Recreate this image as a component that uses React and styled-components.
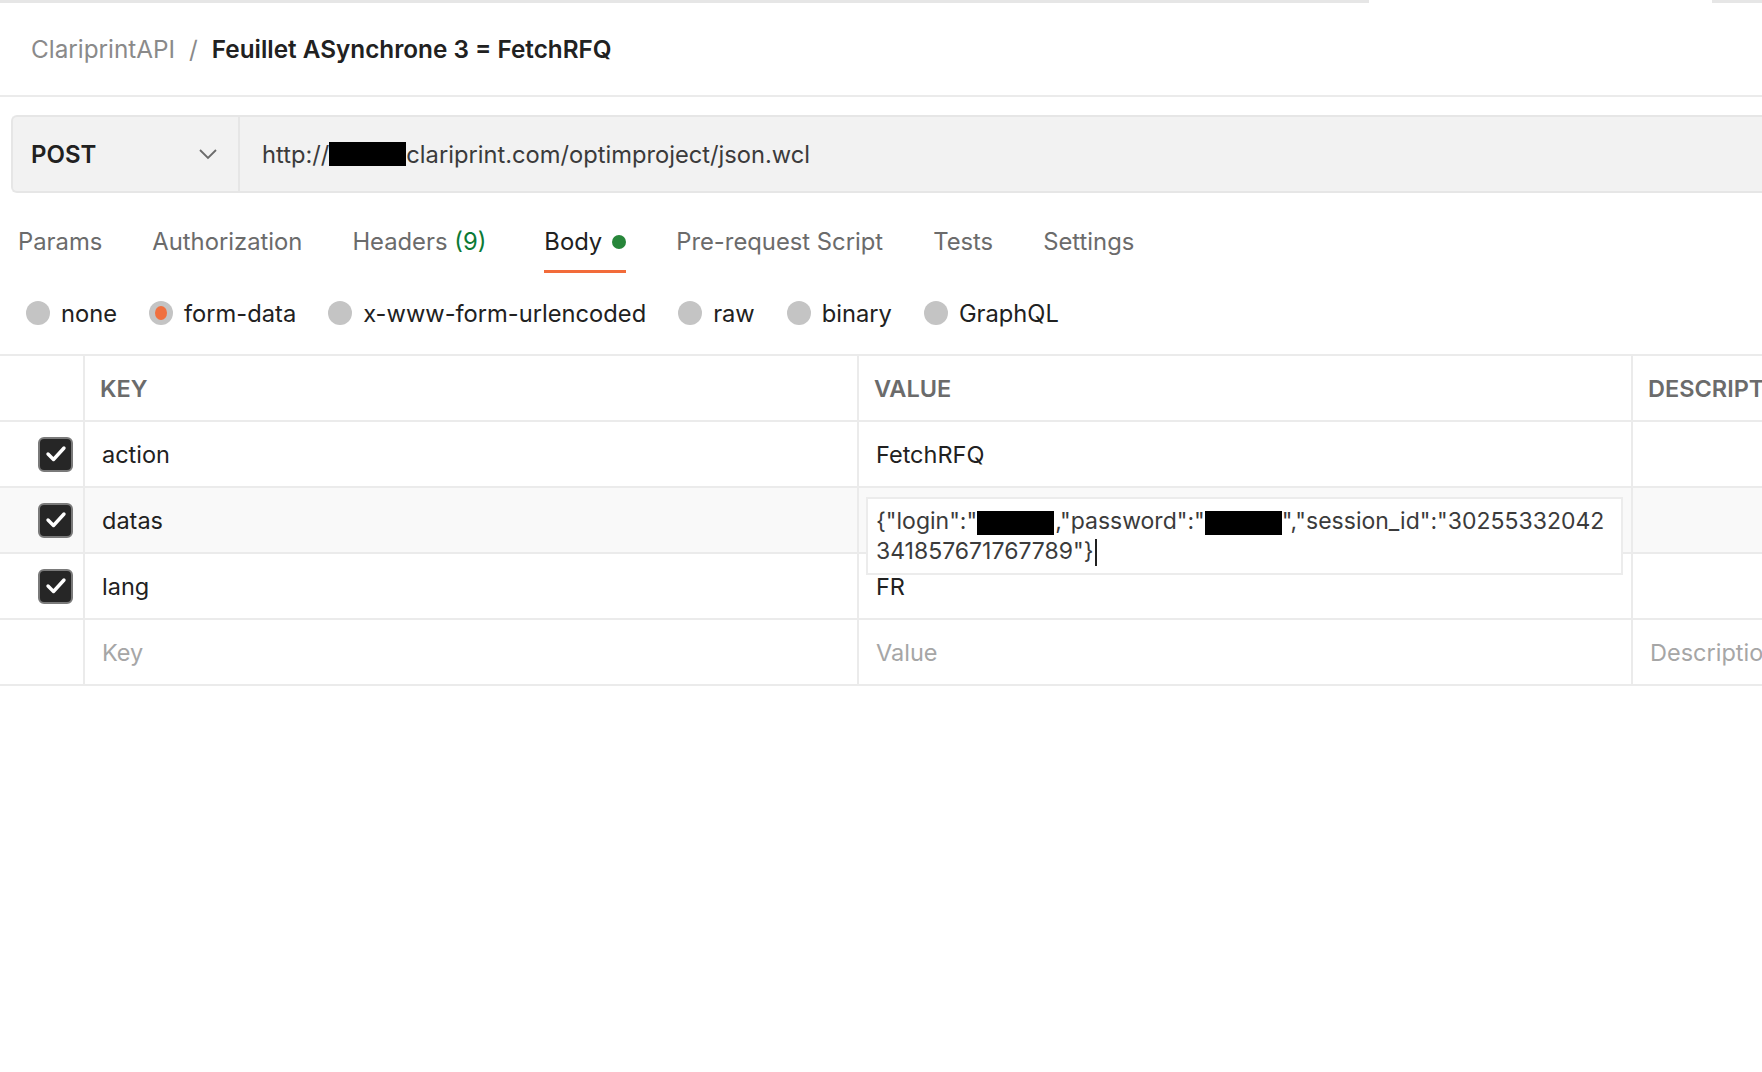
import React from "react";
import styled, { createGlobalStyle } from "styled-components";

const Global = createGlobalStyle`
  html, body {
    margin: 0;
    padding: 0;
    background: #ffffff;
    overflow: hidden;
  }
  body {
    font-family: Inter, "Noto Sans", "Liberation Sans", sans-serif;
    color: #212121;
  }
`;

const Page = styled.div`
  width: 1762px;
  height: 1072px;
  background: #fff;
  overflow: hidden;
`;

const TopStrip = styled.div`
  display: flex;
  height: 3px;
`;

const StripPart = styled.div`
  width: ${(p) => (p.$w ? p.$w + "px" : "auto")};
  flex: ${(p) => (p.$w ? "none" : "1")};
  background: ${(p) => (p.$active ? "#ffffff" : "#e6e6e6")};
`;

const Header = styled.div`
  height: 92px;
  display: flex;
  align-items: center;
  padding-left: 31px;
  border-bottom: 2px solid #ebebeb;
  font-size: 24.3px;
  gap: 14px;
`;

const Crumb = styled.span`
  color: #8a8a8a;
`;

const Title = styled.span`
  color: #212121;
  font-weight: 600;
`;

const UrlRow = styled.div`
  padding: 18px 0 0 11px;
`;

const UrlBar = styled.div`
  height: 74px;
  display: flex;
  background: #f2f2f2;
  border: 2px solid #e6e6e6;
  border-right: none;
  border-radius: 6px 0 0 6px;
`;

const Method = styled.div`
  width: 227px;
  box-sizing: border-box;
  padding: 0 20px 0 18px;
  display: flex;
  align-items: center;
  justify-content: space-between;
  border-right: 2px solid #e6e6e6;
  font-size: 24px;
  font-weight: 600;
  color: #212121;
`;

const UrlText = styled.div`
  display: flex;
  align-items: center;
  padding-left: 22px;
  font-size: 23.7px;
  color: #3b3b3b;
`;

const Redact = styled.span`
  display: inline-block;
  width: ${(p) => p.$w}px;
  height: ${(p) => p.$h || 22}px;
  background: #000;
  vertical-align: middle;
  margin: ${(p) => p.$m || "0"};
`;

const Tabs = styled.div`
  display: flex;
  gap: 50px;
  padding-left: 18px;
`;

const Tab = styled.div`
  display: flex;
  align-items: center;
  gap: 10px;
  padding-top: 34px;
  height: 30px;
  padding-bottom: 13px;
  margin-right: ${(p) => p.$extra || 0}px;
  border-bottom: 3px solid ${(p) => (p.$active ? "#f26b3a" : "transparent")};
  font-size: 23.8px;
  line-height: 30px;
  color: ${(p) => (p.$active ? "#212121" : "#6b6b6b")};
`;

const Count = styled.span`
  color: #0b7a35;
`;

const Dot = styled.span`
  width: 14px;
  height: 14px;
  border-radius: 50%;
  background: #27863a;
`;

const Radios = styled.div`
  display: flex;
  align-items: center;
  gap: 32px;
  height: 50px;
  margin: 15px 0 16px;
  padding-left: 26px;
`;

const RadioItem = styled.label`
  display: flex;
  align-items: center;
  gap: 11px;
  font-size: 23.7px;
  color: #212121;
`;

const RadioCircle = styled.span`
  width: 24px;
  height: 24px;
  border-radius: 50%;
  background: #c4c4c4;
  display: flex;
  align-items: center;
  justify-content: center;
  &::after {
    content: "";
    width: 12px;
    height: 14px;
    border-radius: 50%;
    background: ${(p) => (p.$on ? "#f0703f" : "transparent")};
  }
`;

const Table = styled.div`
  display: grid;
  grid-template-columns: 83px 774px 774px 1fr;
  border-top: 2px solid #ebebeb;
`;

const Cell = styled.div`
  position: relative;
  height: 64px;
  display: flex;
  align-items: center;
  box-sizing: content-box;
  border-bottom: 2px solid #ebebeb;
  border-left: ${(p) => (p.$first ? "none" : "2px solid #ebebeb")};
  padding-left: ${(p) => (p.$first ? 0 : 17)}px;
  background: ${(p) => (p.$shade ? "#f9f9f9" : "#fff")};
  font-size: 23.5px;
  color: ${(p) => (p.$ph ? "#a6a6a6" : "#212121")};
  justify-content: ${(p) => (p.$first ? "flex-end" : "flex-start")};
  padding-right: ${(p) => (p.$first ? 10 : 0)}px;
  white-space: nowrap;
  overflow: ${(p) => (p.$open ? "visible" : "hidden")};
`;

const HeadCell = styled(Cell)`
  font-size: 23.5px;
  font-weight: 600;
  color: #6b6b6b;
  padding-left: ${(p) => (p.$first ? 0 : 15)}px;
`;

const Check = styled.span`
  width: 31px;
  height: 31px;
  border-radius: 6px;
  background: #262626;
  border: 2px solid #7a7a7a;
  display: flex;
  align-items: center;
  justify-content: center;
`;

const Editor = styled.div`
  position: absolute;
  left: 7px;
  top: 9px;
  width: 737px;
  padding: 7px 8px;
  background: #fff;
  border: 2px solid #ececec;
  font-size: 23px;
  line-height: 30px;
  color: #3b3b3b;
  z-index: 2;
  white-space: nowrap;
`;

const Caret = styled.span`
  display: inline-block;
  width: 2px;
  height: 27px;
  background: #212121;
  vertical-align: middle;
  margin-left: 1px;
`;

const Chevron = () => (
  <svg width="20" height="12" viewBox="0 0 20 12">
    <polyline points="2,2 10,10 18,2" fill="none" stroke="#6b6b6b" strokeWidth="1.8" />
  </svg>
);

const Tick = () => (
  <svg width="22" height="18" viewBox="0 0 22 18">
    <polyline points="3,9 8.5,14.5 19,3" fill="none" stroke="#fff" strokeWidth="3.4" strokeLinecap="round" strokeLinejoin="round" />
  </svg>
);

const rows = [
  { key: "action", value: "FetchRFQ" },
  { key: "datas", value: "", open: true, shade: true },
  { key: "lang", value: "FR" },
];

export default function App() {
  return (
    <Page>
      <Global />
      <TopStrip>
        <StripPart $w={1369} />
        <StripPart $w={343} $active />
        <StripPart />
      </TopStrip>
      <Header>
        <Crumb>ClariprintAPI</Crumb>
        <Crumb>/</Crumb>
        <Title>Feuillet ASynchrone 3 = FetchRFQ</Title>
      </Header>
      <UrlRow>
        <UrlBar>
          <Method>
            POST
            <Chevron />
          </Method>
          <UrlText>
            http://<Redact $w={77} $h={24} />clariprint.com/optimproject/json.wcl
          </UrlText>
        </UrlBar>
      </UrlRow>
      <Tabs>
        <Tab>Params</Tab>
        <Tab>Authorization</Tab>
        <Tab $extra={8}>
          <span>
            Headers <Count>(9)</Count>
          </span>
        </Tab>
        <Tab $active>
          Body <Dot />
        </Tab>
        <Tab>Pre-request Script</Tab>
        <Tab>Tests</Tab>
        <Tab>Settings</Tab>
      </Tabs>
      <Radios>
        {["none", "form-data", "x-www-form-urlencoded", "raw", "binary", "GraphQL"].map((r) => (
          <RadioItem key={r}>
            <RadioCircle $on={r === "form-data"} />
            {r}
          </RadioItem>
        ))}
      </Radios>
      <Table>
        <HeadCell $first />
        <HeadCell>KEY</HeadCell>
        <HeadCell>VALUE</HeadCell>
        <HeadCell>DESCRIPTION</HeadCell>
        {rows.map((r) => (
          <React.Fragment key={r.key}>
            <Cell $first $shade={r.shade}>
              <Check>
                <Tick />
              </Check>
            </Cell>
            <Cell $shade={r.shade}>{r.key}</Cell>
            <Cell $shade={r.shade} $open={r.open}>
              {r.open ? (
                <Editor>
                  {'{"login":"'}
                  <Redact $w={77} $h={24} $m="0 1px 0 0" />
                  {',"password":"'}
                  <Redact $w={77} $h={24} />
                  {'","session_id":"30255332042'}
                  <br />
                  {'341857671767789"}'}
                  <Caret />
                </Editor>
              ) : (
                r.value
              )}
            </Cell>
            <Cell $shade={r.shade} />
          </React.Fragment>
        ))}
        <Cell $first />
        <Cell $ph>Key</Cell>
        <Cell $ph>Value</Cell>
        <Cell $ph>Description</Cell>
      </Table>
    </Page>
  );
}
